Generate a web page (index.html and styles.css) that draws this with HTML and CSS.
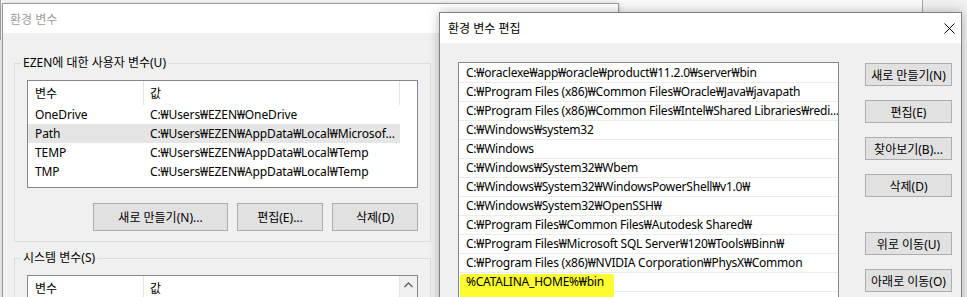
FILE: index.html
```html
<!DOCTYPE html>
<html lang="ko">
<head>
<meta charset="utf-8">
<title>환경 변수 편집</title>
<link rel="stylesheet" href="styles.css">
</head>
<body>
<div class="desk">
  <div class="sys-win"></div>

  <section class="win env">
    <header class="titlebar">환경 변수</header>
    <div class="env-body">
      <fieldset class="group user">
        <legend>EZEN에 대한 사용자 변수(U)</legend>
        <div class="listview">
          <div class="lv-head"><span class="c1">변수</span><span class="c2">값</span></div>
          <div class="lv-row"><span class="c1">OneDrive</span><span class="c2">C:₩Users₩EZEN₩OneDrive</span></div>
          <div class="lv-row sel"><span class="c1">Path</span><span class="c2">C:₩Users₩EZEN₩AppData₩Local₩Microsof...</span></div>
          <div class="lv-row"><span class="c1">TEMP</span><span class="c2">C:₩Users₩EZEN₩AppData₩Local₩Temp</span></div>
          <div class="lv-row"><span class="c1">TMP</span><span class="c2">C:₩Users₩EZEN₩AppData₩Local₩Temp</span></div>
        </div>
        <div class="btn-row">
          <button class="btn w-new">새로 만들기(N)...</button>
          <button class="btn w-sm">편집(E)...</button>
          <button class="btn w-sm">삭제(D)</button>
        </div>
      </fieldset>

      <fieldset class="group system">
        <legend>시스템 변수(S)</legend>
        <div class="listview tall">
          <div class="lv-main">
            <div class="lv-head"><span class="c1">변수</span><span class="c2">값</span></div>
          </div>
          <div class="vscroll">
            <div class="sb-up">
              <svg width="9" height="6" viewBox="0 0 9 6"><path d="M0.5 5 L4.5 1 L8.5 5" fill="none" stroke="#606060" stroke-width="1.3"/></svg>
            </div>
          </div>
        </div>
      </fieldset>
    </div>
  </section>

  <section class="win edit">
    <header class="titlebar">
      <span>환경 변수 편집</span>
      <svg class="close" width="11" height="11" viewBox="0 0 11 11"><path d="M0.5 0.5 L10.5 10.5 M10.5 0.5 L0.5 10.5" stroke="#000" stroke-width="1"/></svg>
    </header>
    <div class="edit-body">
      <ul class="paths">
        <li>C:₩oraclexe₩app₩oracle₩product₩11.2.0₩server₩bin</li>
        <li>C:₩Program Files (x86)₩Common Files₩Oracle₩Java₩javapath</li>
        <li>C:₩Program Files (x86)₩Common Files₩Intel₩Shared Libraries₩redi...</li>
        <li>C:₩Windows₩system32</li>
        <li>C:₩Windows</li>
        <li>C:₩Windows₩System32₩Wbem</li>
        <li>C:₩Windows₩System32₩WindowsPowerShell₩v1.0₩</li>
        <li>C:₩Windows₩System32₩OpenSSH₩</li>
        <li>C:₩Program Files₩Common Files₩Autodesk Shared₩</li>
        <li>C:₩Program Files₩Microsoft SQL Server₩120₩Tools₩Binn₩</li>
        <li>C:₩Program Files (x86)₩NVIDIA Corporation₩PhysX₩Common</li>
        <li class="mark"><span>%CATALINA_HOME%₩bin</span></li>
      </ul>
      <div class="side">
        <button class="btn">새로 만들기(N)</button>
        <button class="btn">편집(E)</button>
        <button class="btn">찾아보기(B)...</button>
        <button class="btn">삭제(D)</button>
        <button class="btn move">위로 이동(U)</button>
        <button class="btn">아래로 이동(O)</button>
      </div>
    </div>
  </section>
</div>
</body>
</html>
```

FILE: styles.css
```css
* { box-sizing: border-box; }
html, body { margin: 0; padding: 0; }
body {
  width: 967px;
  height: 297px;
  overflow: hidden;
  background: #f0f0f0;
  font-family: "Noto Sans", "Noto Sans CJK KR", sans-serif;
  font-size: 12px;
  color: #000;
}
.desk {
  position: relative;
  width: 967px;
  height: 297px;
  overflow: hidden;
  background: #f0f0f0;
}
.sys-win {
  position: absolute;
  left: 0;
  top: -20px;
  width: 923px;
  height: 60px;
  background: #fafafa;
  border-right: 1px solid #a8a8a8;
  border-left: 1px solid #a8a8a8;
}
.win {
  position: absolute;
  display: flex;
  flex-direction: column;
  background: #f0f0f0;
}
.titlebar {
  flex: none;
  display: flex;
  align-items: center;
  background: #fff;
  white-space: nowrap;
}

/* background window */
.env {
  left: 2px;
  top: 3px;
  width: 617px;
  height: 330px;
  border: 1px solid #9a9a9a;
  box-shadow: 0 0 6px rgba(0, 0, 0, 0.18);
}
.env .titlebar {
  height: 29px;
  padding-left: 7px;
  color: #9c9c9c;
}
.env-body {
  padding: 22px 0 0 11px;
}
.group {
  width: 417px;
  margin: 0;
  padding: 0 12px 10px 12px;
  border: 1px solid #dcdcdc;
  min-width: 0;
}
.group legend {
  padding: 0 2px;
  margin-left: -6px;
  line-height: 16px;
}
.group.system {
  margin-top: 8px;
  padding-bottom: 0;
}
.listview {
  margin-top: 9px;
  height: 108px;
  background: #fff;
  border: 1px solid #828790;
  letter-spacing: -0.1px;
}
.listview.tall {
  display: flex;
  height: 60px;
}
.lv-main { flex: 1; }
.lv-head {
  display: flex;
  height: 24px;
}
.lv-head span {
  display: flex;
  align-items: center;
  border-right: 1px solid #e5e5e5;
}
.c1 {
  width: 116px;
  padding-left: 7px;
  flex: none;
}
.c2 {
  width: 256px;
  padding-left: 6px;
  flex: none;
  white-space: nowrap;
  overflow: hidden;
}
.lv-row {
  display: flex;
  align-items: center;
  height: 19px;
  width: 372px;
  white-space: nowrap;
}
.lv-row.sel { background: #e5e5e5; }
.btn-row {
  display: flex;
  justify-content: flex-end;
  gap: 9px;
  margin-top: 15px;
}
.btn {
  font: inherit;
  color: #000;
  background: #e1e1e1;
  border: 1px solid #adadad;
  padding: 0;
  white-space: nowrap;
}
.btn-row .btn { height: 28px; }
.w-new { width: 135px; }
.w-sm { width: 86px; }
.vscroll {
  width: 17px;
  flex: none;
  background: #f0f0f0;
}
.sb-up {
  height: 17px;
  display: flex;
  align-items: center;
  justify-content: center;
}

/* front dialog */
.edit {
  left: 439px;
  top: 12px;
  width: 523px;
  height: 310px;
  border: 1px solid #808080;
  box-shadow: 0 0 10px rgba(0, 0, 0, 0.28);
}
.edit .titlebar {
  height: 30px;
  justify-content: space-between;
  padding: 0 6px 0 8px;
}
.edit-body {
  display: flex;
  gap: 26px;
  padding: 19px 9px 0 18px;
}
.paths {
  list-style: none;
  margin: 0;
  padding: 1px 0 0 0;
  width: 381px;
  height: 260px;
  flex: none;
  background: #fff;
  border: 1px solid #828790;
  letter-spacing: -0.22px;
}
.paths li {
  height: 19px;
  line-height: 18px;
  padding-left: 7px;
  border-bottom: 1px solid #ececec;
  white-space: nowrap;
  overflow: hidden;
}
.paths li.mark {
  position: relative;
  overflow: visible;
}
.paths li.mark::before {
  content: "";
  position: absolute;
  left: 1px;
  top: 1px;
  width: 154px;
  height: 26px;
  background: #fcfc2e;
  border-radius: 3px;
  filter: blur(0.6px);
}
.paths li.mark span {
  position: relative;
}
.side {
  display: flex;
  flex-direction: column;
  width: 87px;
  flex: none;
  padding-top: 1px;
}
.side .btn {
  height: 23px;
  margin-bottom: 14px;
}
.side .btn.move { margin-top: 21px; }
```
